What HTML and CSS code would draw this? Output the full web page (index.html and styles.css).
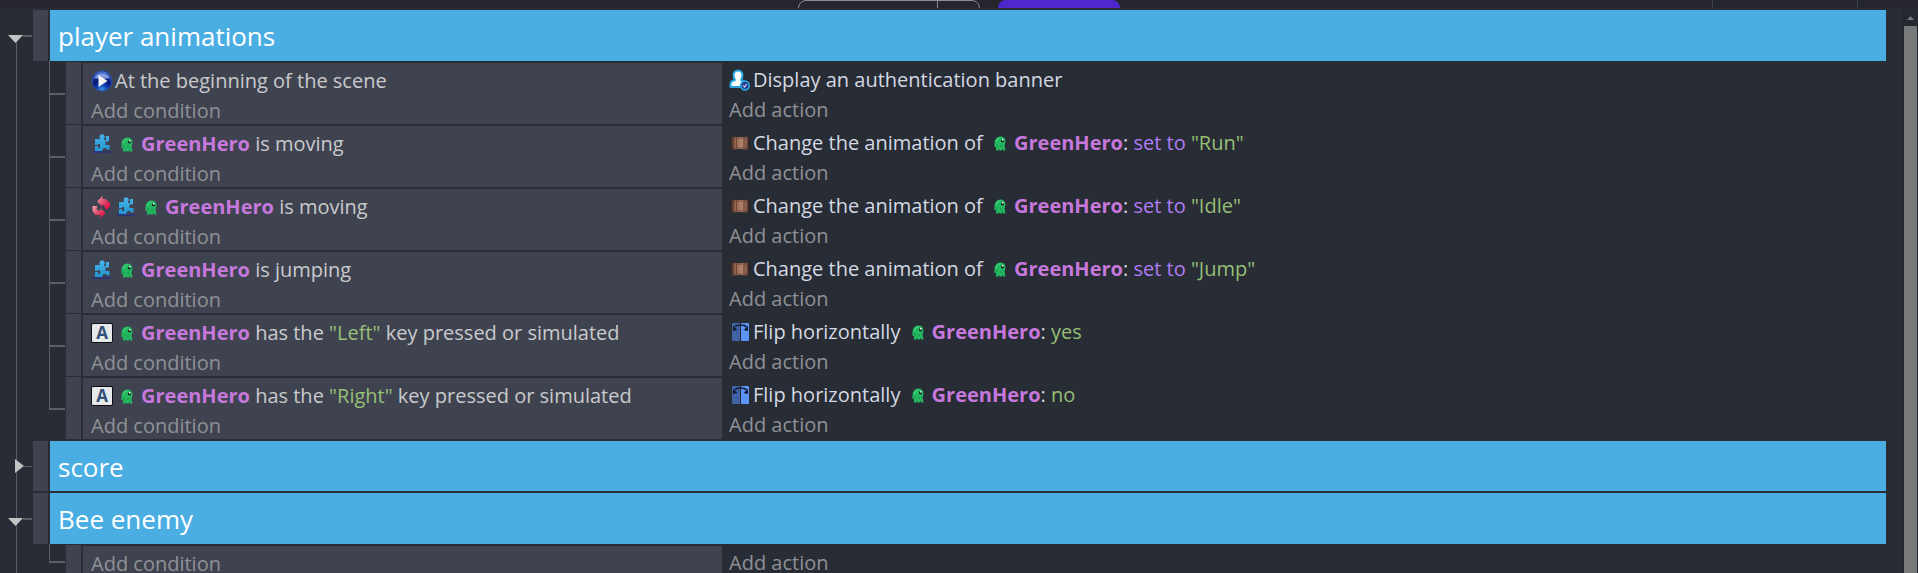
FILE: index.html
```
<!DOCTYPE html>
<html lang="en">
<head>
<meta charset="utf-8">
<title>Events sheet</title>
<link rel="stylesheet" href="styles.css">
</head>
<body>
<svg class="sprites" aria-hidden="true">
  <defs>
    <radialGradient id="orb" cx="50%" cy="95%" r="95%">
      <stop offset="0" stop-color="#3fa4ea"/><stop offset=".3" stop-color="#0d3cae"/><stop offset=".55" stop-color="#08156c"/><stop offset="1" stop-color="#4a78dc"/>
    </radialGradient>
    <linearGradient id="film" x1="0" x2="1">
      <stop offset="0" stop-color="#2c1e1a"/><stop offset=".25" stop-color="#946550"/><stop offset=".6" stop-color="#b5836c"/><stop offset=".85" stop-color="#85594a"/><stop offset="1" stop-color="#1c1412"/>
    </linearGradient>
    <linearGradient id="invert" x1="0" y1="0" x2="1" y2="1">
      <stop offset="0" stop-color="#f2a0b2"/><stop offset=".5" stop-color="#e0466a"/><stop offset="1" stop-color="#e00038"/>
    </linearGradient>
    <linearGradient id="runner" x1="0" y1="0" x2="0" y2="1">
      <stop offset="0" stop-color="#48b4ea"/><stop offset="1" stop-color="#2295d2"/>
    </linearGradient>
  </defs>
  <symbol id="play" viewBox="0 0 22 22">
    <circle cx="11" cy="11" r="10" fill="url(#orb)" stroke="#2350b4"/>
    <path d="M3.500 8a8 7 0 0 1 15 0q-7.500 2-15 0" fill="#b4caff" opacity=".65"/>
    <path d="M7.500 5v12l9-6z" fill="#f4f4f6"/>
  </symbol>
  <symbol id="platformer" viewBox="0 0 22 22">
    <path d="M8.500 4.500a2.700 2.700 0 1 1 4.500 1.500v1H15V3h3v5.500h-3.500V12h4v4.500h-3V15h-3l-1.500 3H4v-5h3v2h2v-4H7v1H4V6h5z" fill="url(#runner)"/>
    <path d="M1.500 19h18" stroke="#2a2f80" stroke-width="1.500"/>
  </symbol>
  <symbol id="hero" viewBox="0 0 12 15">
    <path d="M.5 8Q.5 .5 6.500 .5 11.500 .5 11.500 6L10.500 9.500 11.500 14.500H9L8 12v2.500H5.500L5 12.500l-.5 2H2V11H.5z" fill="#23b860"/>
    <path d="M2 6Q3 2 6.500 1.500" stroke="#4ad983" fill="none"/>
    <circle cx="8.500" cy="4.800" r="1.600" fill="#10241c"/><rect x="8" y="3" width="1.600" height="1.600" fill="#e8f8ee"/>
    <path d="M3 8.500v2M7 9v2" stroke="#168a48"/>
  </symbol>
  <symbol id="invert-icon" viewBox="0 0 22 22">
    <path d="M6 5.500L11.500 0v3h3L19 7v4l-4 2.500-1.500-2V9h-2v2z" fill="url(#invert)"/>
    <path d="M1.500 10h5l-1 3 2 1.500h2V12l5 5-5 5v-3h-5l-3-4z" fill="url(#invert)"/>
  </symbol>
  <symbol id="account" viewBox="0 0 22 22">
    <path d="M1.500 18v-3q0-3 4.500-4Q4.500 9 4.500 6a4.500 4.500 0 0 1 9 0q0 3-1.500 5 4.500 1 4.500 4v3z" fill="#fff" stroke="#27a4de" stroke-width="2" stroke-linejoin="round"/>
    <circle cx="16" cy="16.500" r="4.300" fill="#2b3690" stroke="#27a4de" stroke-width="1.700"/>
    <path d="M14.300 16.500l1.200 1.500 2.300-3" stroke="#d9ddf5" stroke-width="1.200" fill="none"/>
  </symbol>
  <symbol id="animation" viewBox="0 0 22 22">
    <path d="M1.500 4.500q9.500 1 19 0v13q-9.500-1-19 0z" fill="url(#film)"/>
    <path d="M2 6h18M2 16h18" stroke="#4a3026" stroke-width="1" stroke-dasharray="1.500 1"/>
    <path d="M7.500 6v10M15 6v10" stroke="#6b4637"/>
  </symbol>
  <symbol id="flip" viewBox="0 0 22 22">
    <rect x="3" y="2" width="8" height="18" rx="1" fill="#3f63a4"/><rect x="12" y="2" width="8" height="18" rx="1" fill="#5c94f8"/>
    <path d="M6 6q1-2 5.500-2t6 2" fill="none" stroke="#14203c" stroke-width="1.500"/>
    <path d="M4 5v5l4.500-1zM19 5v5l-4.500-1z" fill="#101a30"/>
  </symbol>
</svg>

<header class="toolbar">
  <div class="toolbar-actions">
    <div class="preview"><button class="preview-main" aria-label="Preview"></button><button class="preview-more" aria-label="Preview options"></button></div>
    <button class="publish" aria-label="Publish"></button>
  </div>
  <div class="toolbar-tools"></div>
</header>

<div class="sheet">
<main class="tree">
  <section>
    <div class="group">
      <button class="toggle open" aria-label="Collapse player animations"></button><span class="handle"></span><h2>player animations</h2>
    </div>
    <ul class="events">
      <li class="event"><span class="branch"></span><span class="handle"></span>
        <div class="conditions"><p><svg class="icon"><use href="#play"/></svg>At the beginning of the scene</p><button class="add">Add condition</button></div>
        <div class="actions"><p><svg class="icon"><use href="#account"/></svg>Display an authentication banner</p><button class="add">Add action</button></div>
      </li>
      <li class="event"><span class="branch"></span><span class="handle"></span>
        <div class="conditions"><p><svg class="icon"><use href="#platformer"/></svg><svg class="hero"><use href="#hero"/></svg><b>GreenHero</b> is moving</p><button class="add">Add condition</button></div>
        <div class="actions"><p><svg class="icon"><use href="#animation"/></svg>Change the animation of <svg class="hero"><use href="#hero"/></svg><b>GreenHero</b>: <span class="operator">set to </span><span class="value">"Run"</span></p><button class="add">Add action</button></div>
      </li>
      <li class="event"><span class="branch"></span><span class="handle"></span>
        <div class="conditions"><p><svg class="icon"><use href="#invert-icon"/></svg><svg class="icon"><use href="#platformer"/></svg><svg class="hero"><use href="#hero"/></svg><b>GreenHero</b> is moving</p><button class="add">Add condition</button></div>
        <div class="actions"><p><svg class="icon"><use href="#animation"/></svg>Change the animation of <svg class="hero"><use href="#hero"/></svg><b>GreenHero</b>: <span class="operator">set to </span><span class="value">"Idle"</span></p><button class="add">Add action</button></div>
      </li>
      <li class="event"><span class="branch"></span><span class="handle"></span>
        <div class="conditions"><p><svg class="icon"><use href="#platformer"/></svg><svg class="hero"><use href="#hero"/></svg><b>GreenHero</b> is jumping</p><button class="add">Add condition</button></div>
        <div class="actions"><p><svg class="icon"><use href="#animation"/></svg>Change the animation of <svg class="hero"><use href="#hero"/></svg><b>GreenHero</b>: <span class="operator">set to </span><span class="value">"Jump"</span></p><button class="add">Add action</button></div>
      </li>
      <li class="event"><span class="branch"></span><span class="handle"></span>
        <div class="conditions"><p><span class="key">A</span><svg class="hero"><use href="#hero"/></svg><b>GreenHero</b> has the <span class="value">"Left"</span> key pressed or simulated</p><button class="add">Add condition</button></div>
        <div class="actions"><p><svg class="icon"><use href="#flip"/></svg>Flip horizontally <svg class="hero"><use href="#hero"/></svg><b>GreenHero</b>: <span class="value">yes</span></p><button class="add">Add action</button></div>
      </li>
      <li class="event"><span class="branch"></span><span class="handle"></span>
        <div class="conditions"><p><span class="key">A</span><svg class="hero"><use href="#hero"/></svg><b>GreenHero</b> has the <span class="value">"Right"</span> key pressed or simulated</p><button class="add">Add condition</button></div>
        <div class="actions"><p><svg class="icon"><use href="#flip"/></svg>Flip horizontally <svg class="hero"><use href="#hero"/></svg><b>GreenHero</b>: <span class="value">no</span></p><button class="add">Add action</button></div>
      </li>
    </ul>
  </section>
  <section>
    <div class="group folded">
      <button class="toggle" aria-label="Expand score"></button><span class="handle"></span><h2>score</h2>
    </div>
  </section>
  <section>
    <div class="group">
      <button class="toggle open" aria-label="Collapse Bee enemy"></button><span class="handle"></span><h2>Bee enemy</h2>
    </div>
    <ul class="events">
      <li class="event"><span class="branch"></span><span class="handle"></span>
        <div class="conditions"><button class="add">Add condition</button></div>
        <div class="actions"><button class="add">Add action</button></div>
      </li>
    </ul>
  </section>
</main>
<div class="scrollbar" aria-hidden="true"><span class="scroll-up"></span><span class="thumb"></span></div>
</div>
</body>
</html>
```
FILE: styles.css
```
* { box-sizing: border-box; }

body {
  margin: 0;
  height: 100vh;
  overflow: hidden;
  display: flex;
  flex-direction: column;
  background: #282c34;
  color: #c9cacc;
  font: 20px/30px "Open Sans", "Noto Sans", sans-serif;
}

button { border: 0; padding: 0; background: none; color: inherit; font: inherit; }
h2, p, ul { margin: 0; padding: 0; }
ul { list-style: none; }
.sprites { position: absolute; width: 0; height: 0; }

/* Toolbar */
.toolbar {
  flex: none;
  display: grid;
  grid-template-columns: 1fr auto 1fr;
  align-items: end;
  height: 8px;
  padding-bottom: 5px;
  background: #25252e;
  overflow: hidden;
}
.toolbar-actions { grid-column: 2; display: flex; gap: 18px; }
.preview {
  display: flex;
  width: 182px;
  height: 32px;
  border: 1px solid #8b8b99;
  border-radius: 8px;
}
.preview-main { flex: 1; border-right: 1px solid #8b8b99; }
.preview-more { width: 41px; }
.publish { width: 122px; height: 32px; border-radius: 8px; background: #4f28cd; }
.toolbar-tools {
  justify-self: end;
  width: 146px;
  height: 32px;
  margin-right: 60px;
  border: solid #3f4350;
  border-width: 0 1px;
}

/* Events tree */
.sheet { flex: 1; display: flex; min-height: 0; }
.tree {
  flex: 1;
  min-width: 0;
  overflow: hidden;
  padding-right: 16px;
  background: linear-gradient(#5b5e66, #5b5e66) 16px 30px / 1px 100% no-repeat;
}

.group {
  display: grid;
  grid-template-columns: 33px 15px 1fr;
  height: 53px;
  padding-top: 2px;
}
.group.folded { height: 52px; }
.group h2 {
  margin-left: 2px;
  padding: 2px 8px 0;
  background: #4aaee3;
  color: #fff;
  font-size: 26px;
  font-weight: 400;
  line-height: 48px;
}
.handle { background: #3f4350; }

.toggle {
  display: flex;
  align-items: center;
  padding-left: 15px;
}
.toggle::before {
  content: "";
  width: 9px;
  height: 14px;
  background: #c3c3c3;
  clip-path: polygon(0 0, 100% 50%, 0 100%);
}
.toggle::after { content: ""; width: 8px; height: 1px; background: #5b5e66; }
.toggle.open { align-items: flex-start; padding: 25px 0 0 8px; }
.toggle.open::before {
  width: 15px;
  height: 8px;
  clip-path: polygon(0 0, 100% 0, 50% 100%);
}
.toggle.open::after { width: 9px; height: 2px; }

.events { padding-left: 49px; }
.event {
  display: grid;
  grid-template-columns: 17px 15px 641fr 1164fr;
}
.branch {
  margin-right: 1px;
  background:
    linear-gradient(#5b5e66, #5b5e66) 0 100% / 1px 100% no-repeat,
    linear-gradient(#5b5e66, #5b5e66) 0 calc(50% + 1px) / 100% 2px no-repeat;
}
.event:last-child .branch {
  background:
    linear-gradient(#5b5e66, #5b5e66) 0 0 / 1px 50% no-repeat,
    linear-gradient(#5b5e66, #5b5e66) 0 calc(50% + 1px) / 100% 2px no-repeat;
}
.event .handle { margin-top: 1px; }
.conditions, .actions { display: flex; flex-direction: column; align-items: flex-start; white-space: nowrap; }
.conditions { margin: 2px 0 0 2px; padding: 3px 8px 0; background: #3f4350; }
.actions { padding: 4px 7px 0; color: #d4d9e4; }
.add { padding-top: 2px; line-height: 26px; color: #8f9196; }

p { display: flex; align-items: center; height: 30px; white-space: pre; }
b { font-weight: 700; color: #c678dd; }
.value { color: #95bf76; }
.operator { color: #b07cf6; }

.icon { flex: none; width: 22px; height: 22px; margin-right: 2px; }
.hero { flex: none; width: 12px; height: 15px; margin: 0 8px 0 6px; }
.key {
  flex: none;
  width: 22px;
  height: 20px;
  margin-right: 2px;
  border: 1px solid #0e0f12;
  border-radius: 2px;
  background: #e6e8ea;
  color: #33507a;
  font-size: 17px;
  font-weight: 700;
  line-height: 17px;
  text-align: center;
}

/* Scrollbar */
.scrollbar {
  flex: none;
  display: flex;
  flex-direction: column;
  width: 16px;
  padding: 8px 1px 0 2px;
  background: #25282e;
}
.scroll-up {
  align-self: center;
  width: 7px;
  height: 4px;
  margin-bottom: 6px;
  background: #78797a;
  clip-path: polygon(50% 0, 100% 100%, 0 100%);
}
.thumb { flex: 1; background: #78797a; }
```
